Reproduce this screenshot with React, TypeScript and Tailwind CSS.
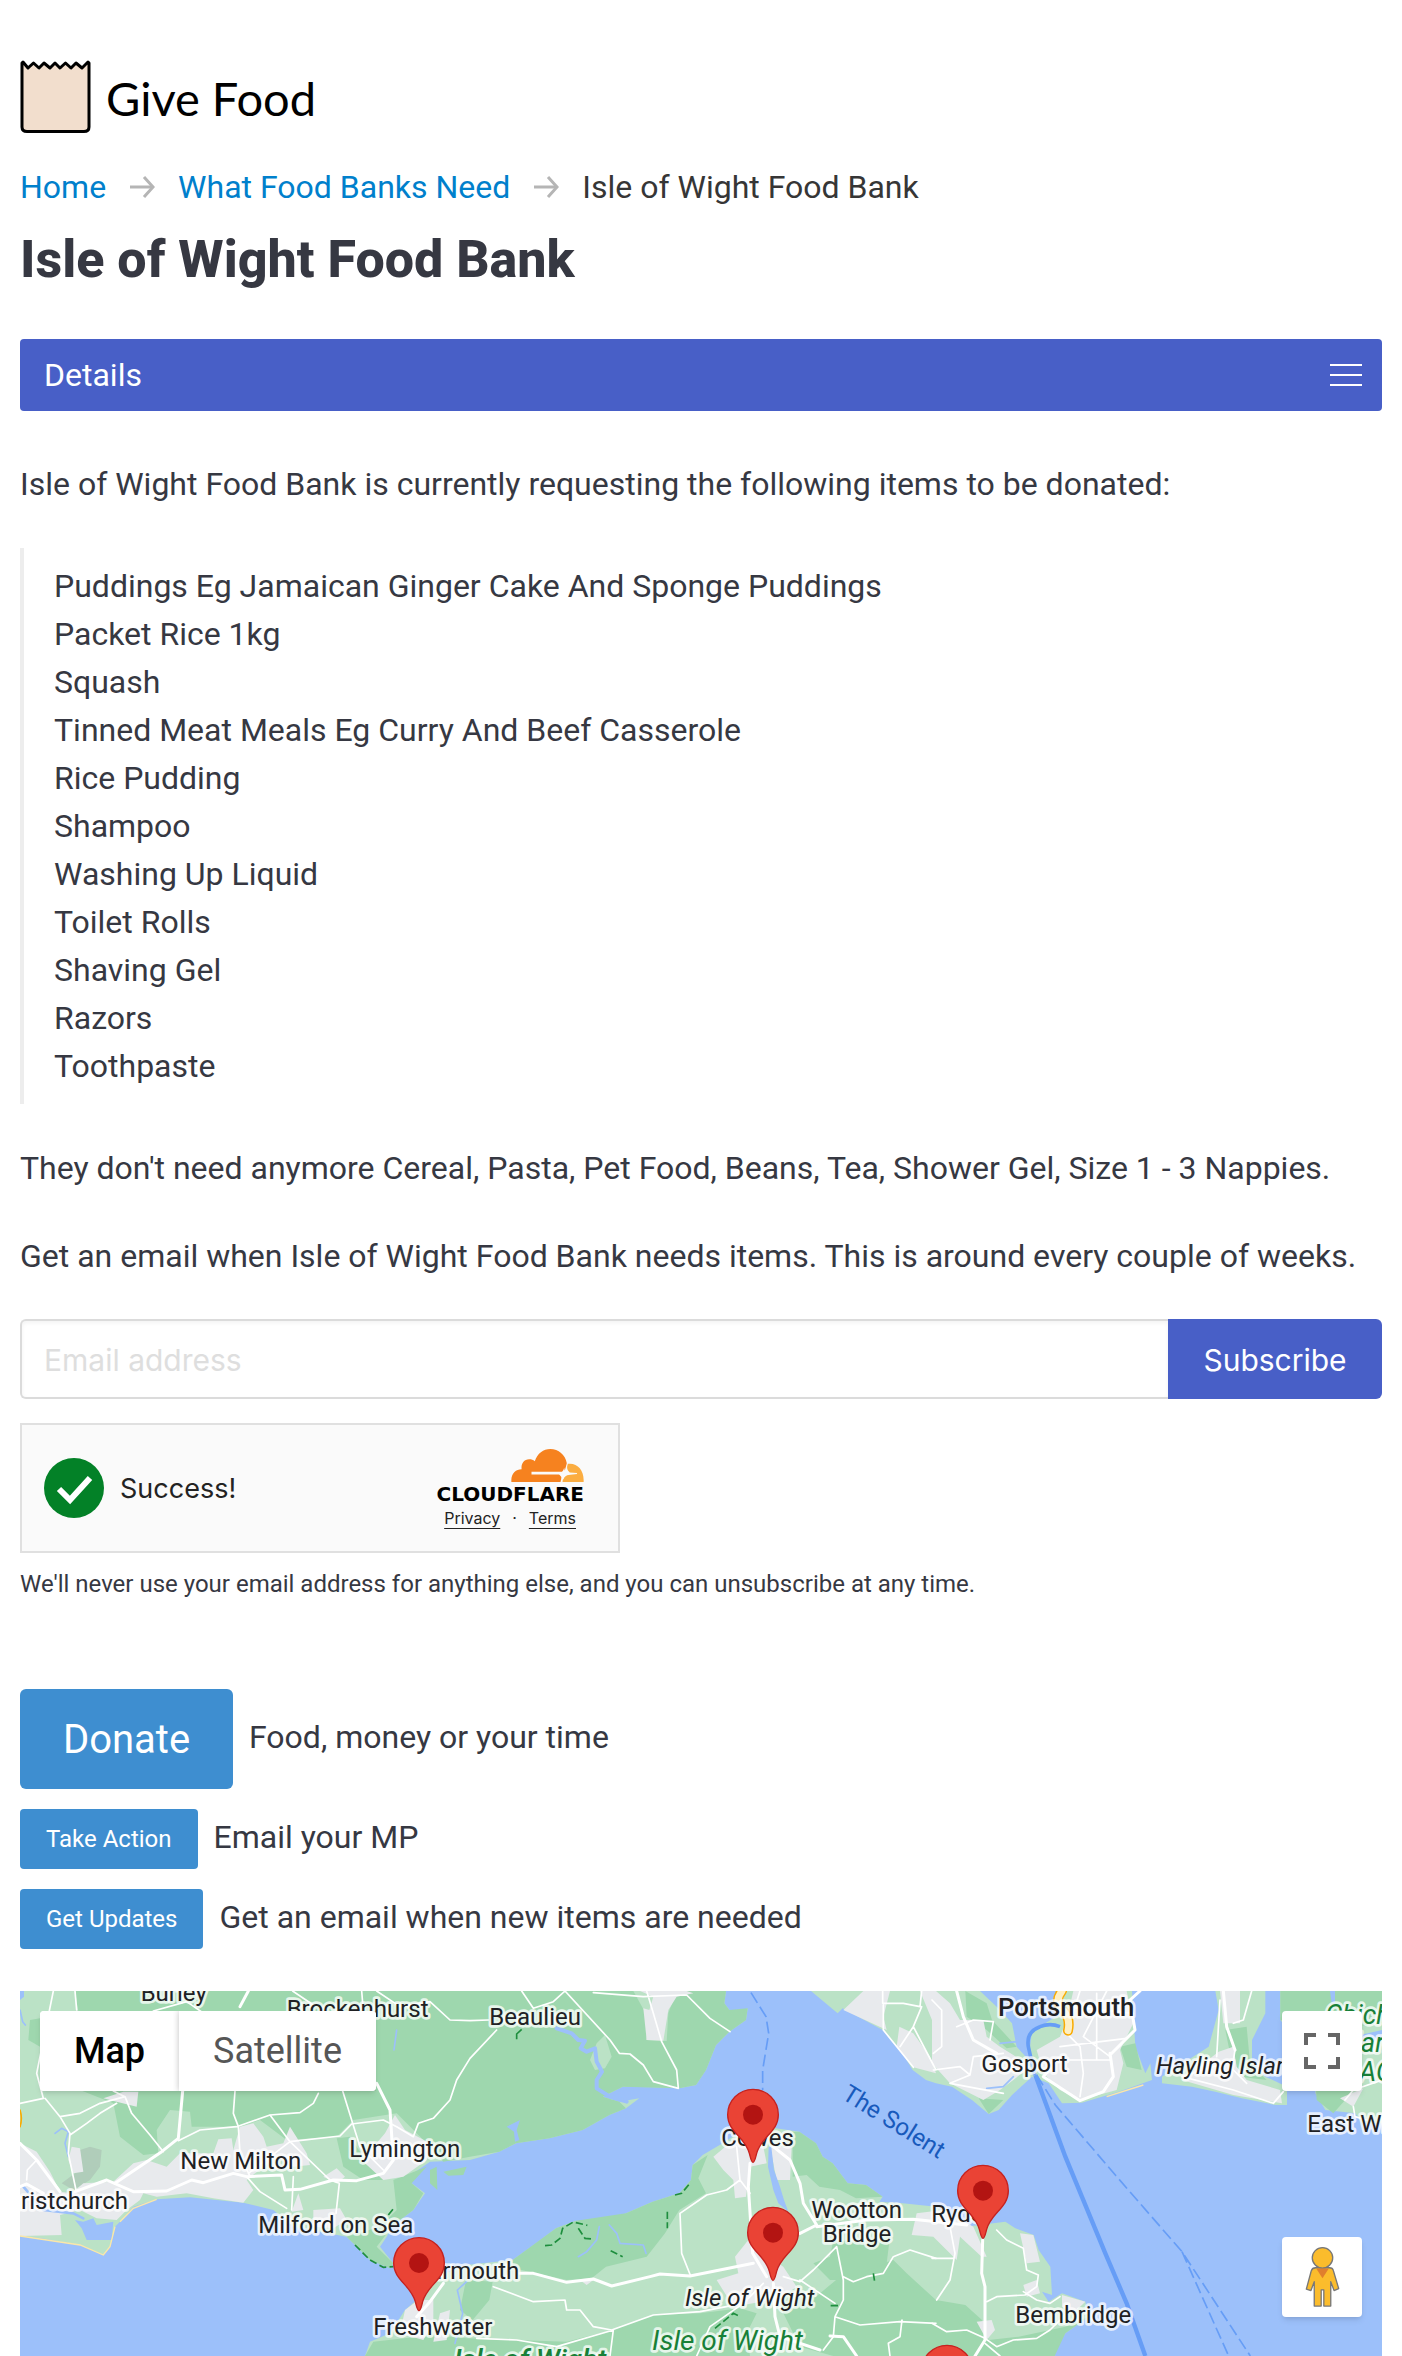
import type { ReactNode } from 'react'

const items = [
  'Puddings Eg Jamaican Ginger Cake And Sponge Puddings',
  'Packet Rice 1kg',
  'Squash',
  'Tinned Meat Meals Eg Curry And Beef Casserole',
  'Rice Pudding',
  'Shampoo',
  'Washing Up Liquid',
  'Toilet Rolls',
  'Shaving Gel',
  'Razors',
  'Toothpaste',
]

function Logo() {
  return (
    <a href="#home" aria-label="Give Food" className="flex items-center gap-[14px] text-black">
      <svg viewBox="0 0 72 74" className="h-[74px] w-[72px]" aria-hidden="true">
        <path
          d="M2 3 L3 2 L8 8 L13.500 3 L19 8 L24 3 L30 8 L35 3 L40 8 L45.500 3 L51 8 L56 3 L62 8 L68 2 L69 3 V67 Q69 71.500 64 71.500 H7 Q2 71.500 2 67 Z"
          fill="#f2decd"
          stroke="#000"
          strokeWidth="3"
          strokeLinejoin="round"
        />
      </svg>
      <span className="pt-[2px] font-['Lato',sans-serif] text-[47px] leading-none">Give Food</span>
    </a>
  )
}

function Arrow() {
  return (
    <svg viewBox="0 0 26 24" className="h-6 w-[26px] shrink-0" fill="none" stroke="#b5b5b5" strokeWidth="3" aria-hidden="true">
      <path d="M1 12 H24" />
      <path d="M15 2 L24 12 L15 22" />
    </svg>
  )
}

function CloudMark() {
  return (
    <svg viewBox="273 143 219 100" className="h-[33px] w-[73px]" aria-hidden="true">
      <path
        d="M273 243 V235 C274 216 287 204 304 204 C302 186 312 174 327 174 C334 174 339 176 344 180 C352 156 370 143 391 143 C416 143 436 160 441 186 L434 212 H334 V220 H418 Q426 226 424 234 L422 243 Z"
        fill="#f6821f"
      />
      <path d="M444 188 C472 184 492 206 492 236 V243 H428 C429 230 437 221 452 221 L472 219 V216 L450 214 Q438 206 444 188 Z" fill="#fbad41" />
      <path d="M433 200 Q434 216 452 218 Q436 220 430 236 Q430 220 412 218 Q430 216 433 200 Z" fill="#fafafa" />
    </svg>
  )
}

function Turnstile() {
  return (
    <div className="mt-6 flex h-[130px] w-[600px] max-w-full items-center border-2 border-[#e0e0e0] bg-[#fafafa] pl-[22px] pr-[34px] font-['Inter',sans-serif] text-[#232323]">
      <svg viewBox="0 0 60 60" className="size-[60px]" aria-hidden="true">
        <circle cx="30" cy="30" r="30" fill="#038127" />
        <path d="M15 31 L26 42 L46 20" fill="none" stroke="#fff" strokeWidth="6" />
      </svg>
      <span className="ml-4 pt-[2px] text-[27px]">Success!</span>
      <div className="ml-auto flex flex-col items-end">
        <CloudMark />
        <span className="mt-[2px] font-['DejaVu_Sans',sans-serif] text-[20px] font-bold leading-5 text-black">CLOUDFLARE</span>
        <div className="mt-1 flex gap-3 pr-2 text-base leading-5">
          <a href="#privacy" className="underline underline-offset-4">Privacy</a>
          <span>·</span>
          <a href="#terms" className="underline underline-offset-4">Terms</a>
        </div>
      </div>
    </div>
  )
}

function Pin({ x, y }: { x: number; y: number }) {
  return (
    <g transform={`translate(${x} ${y})`}>
      <path
        d="M0 143 C-5 143 -7 132 -11 116 C-24 66 -76 52 -76 0 A76 76 0 0 1 76 0 C76 52 24 66 11 116 C7 132 5 143 0 143 Z"
        fill="#ea4335"
        stroke="#c5221f"
        strokeWidth="4"
      />
      <circle r="30" fill="#b31412" />
    </g>
  )
}

function Label({ x, y, children, end, green, italic, medium, size = 72 }: {
  x: number
  y: number
  children: ReactNode
  end?: boolean
  green?: boolean
  italic?: boolean
  medium?: boolean
  size?: number
}) {
  return (
    <text
      x={x}
      y={y}
      fontSize={size}
      textAnchor={end ? 'end' : 'start'}
      fill={green ? '#188038' : '#202124'}
      fontStyle={italic ? 'italic' : 'normal'}
      fontWeight={medium ? 500 : 400}
      stroke="#fff"
      strokeOpacity="0.75"
      strokeWidth="16"
      strokeLinejoin="round"
      paintOrder="stroke"
    >
      {children}
    </text>
  )
}

const light = '#bbe2c6'
const dark = '#9ed7ae'
const town = '#e8eaed'
const water = '#9cc0fa'

function MapDrawing() {
  return (
    <svg viewBox="60 33 4086 1095" preserveAspectRatio="xMidYMid slice" className="h-full w-full font-['Roboto',sans-serif]" role="img" aria-label="Map of the Isle of Wight">
      <rect x="60" y="33" width="4086" height="1095" fill={water} />

      <g fill={light}>
        <path d="M60 33 V768 L125 775 240 795 310 825 330 800 345 740 370 715 400 680 470 658 570 652 650 660 730 668 820 690 850 715 880 740 1040 770 1065 795 1110 840 1170 865 1180 850 1140 800 1160 770 1180 735 1240 690 1275 640 1235 610 1240 580 1290 545 1410 540 1498 515 1548 490 1648 475 1748 450 1828 405 1878 385 1918 355 1858 365 1808 350 1868 320 1958 322 2038 325 2088 315 2118 270 2148 195 2188 155 2238 120 2243 85 2218 95 2188 90 2173 70 2178 33 Z" />
        <path d="M2433 33 L2513 100 2528 85 2648 150 2698 205 2738 270 2778 300 2808 310 2856 320 2916 360 2966 402 2996 390 3036 345 3096 290 3146 310 3186 370 3246 368 3356 335 3456 300 3451 250 3436 280 3406 200 3396 33 Z" />
        <path d="M3646 33 L3656 90 3626 200 3486 290 3486 310 3576 320 3646 335 3726 355 3826 375 3861 375 3861 320 3796 290 3756 250 3756 180 3796 100 3796 33 Z" />
        <path d="M3841 33 H4146 V430 L4086 430 4066 400 3976 390 3946 340 3946 250 3841 120 Z" />
        <path d="M1095 1128 L1110 1085 1170 1060 1215 990 1250 960 1310 890 1398 855 1538 840 1608 790 1668 745 1728 722 1798 740 1828 730 1878 700 1958 665 2038 640 2073 600 2078 555 2108 525 2168 490 2228 450 2298 440 2398 455 2448 490 2468 530 2498 550 2543 610 2598 615 2648 650 2638 665 2708 670 2808 680 2896 740 3016 725 3046 745 3101 765 3116 810 3151 860 3156 945 3126 935 3146 965 3186 940 3256 965 3266 1010 3196 1060 3166 1110 3164 1128 Z" />
      </g>

      <g fill={dark}>
        <path d="M225 33 L235 95 240 330 340 370 360 470 430 525 475 520 470 450 510 390 570 395 575 440 720 440 780 420 860 480 1010 470 1060 420 1190 400 1250 460 1300 510 1330 545 1410 530 1498 515 1548 490 1648 475 1748 450 1828 405 1878 385 1858 365 1808 350 1868 320 2038 325 2088 315 2118 270 2148 195 2188 155 2238 120 2243 85 2188 90 2173 70 2178 33 Z" />
        <path d="M90 120 L120 115 120 200 85 180 Z M1180 600 L1280 560 1235 610 1270 640 1240 690 1180 735 1130 800 1180 850 1170 865 1110 840 1065 795 1040 770 1140 740 1190 690 Z M1290 570 L1310 560 1312 630 1290 610 Z M1330 575 L1400 560 1390 585 1345 587 Z" />
        <path d="M1010 475 L1050 470 1110 560 1150 600 1090 600 1030 560 Z" />
        <path d="M1538 840 L1668 745 1728 722 1878 700 1958 665 2038 640 2073 600 2078 555 2123 525 2095 595 2118 640 2038 690 1995 760 1940 830 1818 860 1775 895 1700 900 1540 865 Z" />
        <path d="M2378 455 H2398 L2448 490 2468 530 2498 550 2543 610 2598 615 2648 650 2568 655 2520 630 2458 620 2420 585 2378 590 Z" />
        <path d="M1095 1128 L1120 1085 1300 1065 1400 1075 1700 1085 1838 1050 1958 1005 2100 1000 2220 985 2270 1000 2240 1060 2250 1128 Z" />
        <path d="M2340 950 L2448 950 2520 890 2680 840 2720 880 2808 960 2896 975 2946 1020 2966 1080 3056 1070 3196 1040 3266 1010 3196 1060 3164 1128 H2500 L2400 1100 2350 1000 Z" />
        <path d="M1398 900 L1478 905 1468 960 1418 1020 1380 990 Z M2440 850 L2490 830 2500 780 2600 790 2670 770 2660 850 2530 900 2490 900 Z" />
        <path d="M3676 150 L3740 140 3750 250 3800 300 3720 290 3690 220 Z M2896 33 L2960 70 2976 120 3050 200 3020 205 2960 150 2900 110 Z M3360 200 L3406 190 3425 270 3380 260 Z M3946 300 L4010 333 4060 333 4000 400 3950 360 Z M3841 33 H4146 V130 L3980 150 3841 120 Z M2936 355 L3010 360 2966 402 Z" />
      </g>

      <g fill={light}>
        <path d="M1900 33 L1948 120 1938 180 2000 183 2005 100 2030 33 Z M1790 190 L1815 165 1835 230 1815 265 1785 270 1770 240 Z" />
      </g>
      <path d="M185 610 L245 565 240 510 270 500 305 510 300 560 270 600 220 630 Z" fill="#b0cdba" />

      <g fill={town}>
        <path d="M60 490 L110 515 150 575 180 635 215 640 250 610 340 605 400 550 440 540 500 560 540 520 640 520 655 478 695 475 700 510 720 440 760 430 790 470 800 500 850 490 870 440 920 520 930 555 880 560 830 530 790 560 740 600 760 630 730 668 640 655 560 640 470 650 430 640 420 660 380 690 350 720 290 715 240 690 180 705 185 765 60 768 Z" />
        <path d="M310 355 L370 335 415 335 410 380 350 365 Z M215 500 L240 505 250 575 220 580 205 540 Z M895 640 L910 690 875 695 Z M940 690 L1020 685 1040 720 1000 745 940 740 Z M970 590 L1010 565 1035 590 1010 610 Z M1095 530 L1155 460 1185 405 1215 450 1290 490 1280 540 1210 590 1150 600 1095 550 Z" />
        <path d="M1810 33 H1920 L1960 50 1948 90 1930 85 1940 180 1990 182 2005 90 2030 50 2080 40 2060 33 Z" />
        <path d="M2590 33 H2670 L2650 110 2660 150 2530 90 Z M2698 140 L2740 160 2790 230 2808 280 2740 262 2690 200 Z M2760 33 H2808 L2850 70 2880 120 2950 120 2960 170 3000 200 3040 225 3090 260 3040 300 3000 330 2950 360 2850 310 2796 250 2796 120 Z" />
        <path d="M3220 33 H3380 L3400 130 3360 210 3370 250 3350 330 3240 360 3180 330 3130 280 3110 210 3180 170 3200 120 Z" />
        <path d="M3660 33 H3720 V130 L3670 130 Z M3656 215 L3700 200 3710 260 3740 300 3840 330 3846 370 3700 345 3546 300 Z M4020 355 L4090 325 4060 380 Z" />
        <path d="M2140 530 L2200 480 2290 500 2300 550 2250 560 2238 650 2205 655 2200 600 2170 570 Z M2310 500 L2375 500 2370 600 2330 600 Z M2205 830 L2245 780 2320 840 2350 860 2390 920 2340 955 2200 980 2150 900 2215 880 Z" />
        <path d="M1215 990 L1255 960 1300 960 1300 1030 1270 1080 1200 1060 Z M1320 1000 L1350 990 1340 1080 1300 1085 Z M1740 900 L1780 900 1760 915 Z M2750 700 L2830 690 2920 740 2960 830 2945 830 2880 770 2870 840 2800 770 2735 765 Z M3060 760 L3100 765 3120 845 3080 850 Z M3070 915 L3110 900 3120 940 3080 950 Z M3186 945 L3256 965 3220 1000 3186 980 Z M2930 1025 L2975 1020 2985 1050 2960 1080 Z" />
      </g>

      <g fill={water}>
        <path d="M2940 33 L2990 80 3036 130 3050 200 3086 240 3096 150 3136 130 3176 105 3166 70 3180 33 Z" />
        <path d="M2306 500 L2314 500 2322 570 2340 620 2352 660 2365 695 2335 670 2320 630 2304 560 Z" />
        <path d="M225 720 L250 725 280 715 290 735 340 725 335 780 260 780 245 745 Z M60 33 H72 V50 L60 60 Z M3990 33 H4005 V75 L3995 70 Z M4080 165 L4146 150 V180 L4080 185 Z" />
        <path d="M1520 440 L1560 420 1550 450 1558 480 1545 485 1542 455 Z" />
      </g>
      <g fill="none" stroke={water} strokeLinejoin="round" strokeLinecap="round">
        <path d="M1670 145 L1715 160 1735 180 1755 182 1742 205 1760 215 1785 205 1790 245 1806 275 1790 300 1790 325 1830 350 1880 365" strokeWidth="12" />
        <path d="M70 620 L130 690 220 700 250 715" strokeWidth="8" />
        <path d="M165 460 L185 445 205 455 195 490 205 530 M60 90 L68 125 76 135 M1190 150 L1182 210 M1365 1090 L1388 1000 1372 930 1400 905 M1798 740 L1790 780 1760 815 1735 830 M1828 735 L1850 760 1860 790 1930 795 1938 820 M3000 190 L3050 185 3060 205 M2960 325 L3010 320 3040 290" strokeWidth="5" />
      </g>

      <g fill="none" stroke="#fff" strokeLinejoin="round" strokeLinecap="round">
        <g strokeWidth="9">
          <path d="M60 490 L110 540 180 635 M225 635 L320 600 400 635 500 633 575 600 610 608 700 580 740 590 845 585 855 630 900 628 1000 600 1070 602 1150 580 1180 540 1170 390 1130 310" />
          <path d="M345 610 L485 515 535 475 548 333 M720 80 L745 33 M60 620 L80 612 130 640" />
          <path d="M2250 550 L2245 620 2258 820 2300 890 M2320 500 L2370 540 2400 610 2410 670 2450 735 2400 760 M2070 888 L2260 850 M1560 880 L1600 880 1700 907 1780 897 1835 918 1950 890 1980 882 2070 888 M2450 740 L2600 720 2740 718 2900 735" />
          <path d="M2948 780 L2945 880 2955 920 2955 1080 2925 1128 M2320 910 L2325 1010 2340 1070 2460 1110 M2490 1068 L2530 1070 2570 1128" />
          <path d="M3170 240 L3130 290 3240 362 3310 335 3340 290 3330 220 M3420 33 L3390 60 3405 150 3330 225 M2870 33 L2890 110 2920 180 2990 220" />
          <path d="M1250 1010 L1290 965 1330 910" />
          <path d="M3670 33 L3680 140 3705 210" />
        </g>
        <g strokeWidth="5">
          <path d="M60 370 L130 355 110 280 160 33 M225 33 L230 90 M135 355 L180 410 210 460 205 520 228 630 M180 410 L240 400 300 370 375 350 395 400 450 465 490 515 M210 465 L260 430 300 400 350 370 M375 350 L340 333 M535 482 L600 450 710 440 810 405 900 398 940 370 955 340 M705 333 L700 400 715 440 720 520 750 590 M810 405 L870 485 1020 468 1055 432 1150 420 1190 440 1240 470 M1028 333 L1058 430 1080 500 1150 570 M740 590 L780 635 860 685 M880 590 L875 690 M870 485 L990 600 1018 610 1008 700 M870 485 L745 580 M80 600 L82 570 110 540 M878 33 L940 75 M460 93 L560 65 640 120 M1085 33 L1090 93 M1130 33 L1200 80 1290 65 1350 120 1410 122 1465 120 M1240 470 L1255 430 1300 415 1350 360 1370 300 1410 235 1490 150" />
          <path d="M1565 33 L1600 85 1660 65 1695 33 L1830 180 1858 220 1890 222 1930 255 1960 305 2035 325 2030 270 1985 185 1960 100 1940 33 M1780 38 L1930 50 2060 45 2130 115 2190 155" />
          <path d="M2210 500 L2220 600 2180 630 2120 645 2040 700 2045 820 2072 888 M2220 600 L2250 640 M1480 920 L1600 965 1695 960 1700 990 1740 990 1780 1040 1835 1050 1960 1005 2100 995 2230 970 M1430 1075 L1550 1080 1670 1100 1840 1050 1830 1128 M2290 910 L2230 970 2130 1040 2090 1128 M2350 890 L2400 905 2440 870 2510 800 2530 900 2530 960 2505 1010 2500 1070 2470 1110 M2400 900 L2505 970 M2505 1010 L2580 1035 2700 1025 2808 1030 M2530 890 L2560 905 2600 890 2650 880 2680 830 2730 810 2808 835 M2706 1020 L2700 1070 2665 1090 2670 1128" />
          <path d="M2850 740 L2865 820 2850 900 2810 960 M2990 750 L3020 780 3070 805 3080 870 3115 885 3110 920 3075 945 2990 950 2960 965 M3070 935 L3110 960 3150 970 3180 950 M2796 1030 L2840 1055 2900 1050 2955 1075 2990 1100 3040 1080 3110 1075 3150 1050 3180 1020 M2796 835 H2860 M2955 1090 L3000 1128" />
          <path d="M2796 60 L2825 90 2825 200 2800 220 M2870 140 L2920 120 2980 125 2970 180 M2800 270 L2880 260 2910 285 2850 310 3010 340 M2910 285 L2920 230 3010 220 M3240 33 L3200 160 3240 200 3250 280 3240 350 M3320 33 L3250 170 3330 230 M3210 80 L3400 100 M3180 200 L3380 175 M3160 240 L3330 240 M3290 40 L3290 240 M2648 33 V70 L2710 70 2760 80 2765 33 M2650 75 V150 L2740 262 M2700 200 L2740 140 2808 270 M2740 140 L2765 80 M3660 60 L3650 230 M3700 130 L3730 120 3755 33 M3705 210 L3700 240 3640 260 3546 290 3700 330 3820 370 3850 335 M3700 270 L3740 310 M4060 380 L4065 410 4100 420 M4035 360 L4060 330 4146 300" />
        </g>
      </g>

      <g fill="none" stroke="#fbe7a8" strokeWidth="4">
        <path d="M60 768 L240 795 310 825 330 800 345 740 M360 725 L400 685 470 658 M3320 350 L3430 315" />
      </g>
      <g fill="none" strokeLinecap="round">
        <path d="M3186 33 Q3160 66 3190 92 Q3212 116 3204 152" stroke="#f9ab00" strokeWidth="30" />
        <path d="M3186 33 Q3160 66 3190 92 Q3212 116 3204 152" stroke="#feefc3" strokeWidth="21" />
        <path d="M60 390 Q68 415 60 440" stroke="#f9ab00" strokeWidth="5" />
      </g>

      <g fill="none" stroke="#669df6" strokeWidth="5">
        <path d="M3180 140 Q3150 128 3120 140 Q3078 155 3085 200 L3104 285" strokeWidth="11" />
        <path d="M3106 285 L3196 530 3316 820 3380 970 3436 1128" strokeWidth="13" />
        <path d="M3110 285 L3166 375 3346 585 3546 815 3751 1128 M3546 815 L3686 1128" strokeDasharray="36 14" />
        <path d="M2253 38 L2298 110 2306 160 2288 270 V330" strokeDasharray="36 14" />
      </g>
      <g fill="none" stroke="#1e8e3e" strokeWidth="5" strokeDasharray="22 10">
        <path d="M1065 795 L1110 840 1150 862 1180 860 M1165 705 L1185 680 M2025 645 L2045 640 2068 612 M2002 695 V745 M1635 797 L1655 795 1680 775 1688 745 1720 726 1762 736 M1735 745 L1755 775 1780 777 M1832 812 L1868 830 M2620 880 L2624 905 M2492 977 H2515 M2145 1045 L2200 1000 2222 1010" />
        <path d="M1550 178 V162 L1565 148" strokeDasharray="none" />
      </g>

      <Label x={422} y={62}>Burley</Label>
      <Label x={860} y={111}>Brockenhurst</Label>
      <Label x={1468} y={136}>Beaulieu</Label>
      <Label x={541} y={568}>New Milton</Label>
      <Label x={1048} y={530}>Lymington</Label>
      <Label x={384} y={688} end>Christchurch</Label>
      <Label x={775} y={758}>Milford on Sea</Label>
      <Label x={1558} y={898} end>Yarmouth</Label>
      <Label x={1120} y={1066}>Freshwater</Label>
      <Label x={2164} y={498}>Cowes</Label>
      <Label x={2434} y={715}>Wootton</Label>
      <Label x={2468} y={787}>Bridge</Label>
      <Label x={2794} y={726}>Ryde</Label>
      <Label x={3046} y={1030}>Bembridge</Label>
      <Label x={2944} y={277}>Gosport</Label>
      <Label x={2994} y={108} medium size={77}>Portsmouth</Label>
      <Label x={3922} y={455}>East Wittering</Label>
      <Label x={2055} y={977} italic>Isle of Wight</Label>
      <Label x={3468} y={281} italic>Hayling Island</Label>
      <Label x={1956} y={1109} italic green size={84}>Isle of Wight</Label>
      <Label x={1362} y={1166} italic green medium size={84}>Isle of Wight</Label>
      <Label x={3976} y={132} italic green size={80}>Chichester</Label>
      <Label x={4028} y={217} italic green size={80}>Harbour</Label>
      <Label x={4078} y={302} italic green size={80}>AONB</Label>
      <text transform="translate(2522 354) rotate(32)" fontSize="73" fill="#185abc">The Solent</text>

      <Pin x={1257} y={849} />
      <Pin x={2259} y={404} />
      <Pin x={2319} y={758} />
      <Pin x={2949} y={632} />
      <Pin x={2841} y={1172} />
    </svg>
  )
}

function FoodBankMap() {
  return (
    <section className="relative mt-[42px] h-[365px] overflow-hidden font-['Roboto',sans-serif]" aria-label="Map">
      <MapDrawing />
      <div className="absolute left-5 top-5 flex h-20 rounded bg-white text-4xl shadow-md">
        <button type="button" className="w-[139px] rounded-l bg-white font-medium text-black">Map</button>
        <button type="button" className="w-[197px] rounded-r bg-white text-[#565656] shadow-[0_0_6px_rgba(0,0,0,0.25)] [clip-path:inset(0_0_0_-6px)]">Satellite</button>
      </div>
      <button type="button" aria-label="Toggle fullscreen view" className="absolute right-5 top-5 flex size-20 items-center justify-center rounded bg-white shadow-md">
        <svg viewBox="0 0 36 36" className="size-9" fill="none" stroke="#666" strokeWidth="4" aria-hidden="true">
          <path d="M2 12 V2 H12 M24 2 H34 V12 M34 24 V34 H24 M12 34 H2 V24" />
        </svg>
      </button>
      <button type="button" aria-label="Street View" className="absolute right-5 top-[246px] flex size-20 items-center justify-center rounded bg-white shadow-md">
        <svg viewBox="1114 798 106 186" className="h-[62px] w-[35px]" aria-hidden="true">
          <g fill="#fbbc2c" stroke="#777" strokeWidth="4" strokeLinejoin="round">
            <path d="M1146 863 H1188 Q1198 863 1200 872 L1216 926 L1202 932 L1192 905 V979 H1171 V930 H1163 V979 H1142 V905 L1132 932 L1118 928 L1133 872 Q1136 863 1146 863 Z" />
            <circle cx="1167" cy="833" r="31" />
          </g>
          <path d="M1148 865 H1186 L1167 895 Z" fill="#e07f2d" />
        </svg>
      </button>
    </section>
  )
}

export default function App() {
  return (
    <main className="min-h-screen bg-white px-5 pt-[60px] font-['Roboto',sans-serif] text-[32px] leading-[48px] text-[#363842]">
      <header>
        <Logo />
      </header>

      <nav aria-label="Breadcrumb" className="mt-[29px]">
        <ol className="flex flex-wrap items-center gap-x-[23px]">
          <li className="flex items-center gap-x-[23px]"><a href="#home" className="text-[#0080cc]">Home</a><Arrow /></li>
          <li className="flex items-center gap-x-[23px]"><a href="#needs" className="text-[#0080cc]">What Food Banks Need</a><Arrow /></li>
          <li aria-current="page" className="text-[#363636]">Isle of Wight Food Bank</li>
        </ol>
      </nav>

      <h1 className="mt-[19px] text-[52px] font-extrabold leading-[60px]">Isle of Wight Food Bank</h1>

      <button type="button" className="mt-[49px] flex h-[72px] w-full items-center justify-between rounded bg-[#485fc7] pl-6 pr-5 text-left text-white">
        <span>Details</span>
        <svg viewBox="0 0 32 22" className="h-[22px] w-8" stroke="#fff" strokeWidth="2" aria-hidden="true">
          <path d="M0 1 H32 M0 11 H32 M0 21 H32" />
        </svg>
      </button>

      <p className="mt-[49px]">Isle of Wight Food Bank is currently requesting the following items to be donated:</p>

      <ul className="my-10 border-l-4 border-[#ededed] py-[14px] pl-[30px]">
        {items.map((item) => (
          <li key={item}>{item}</li>
        ))}
      </ul>

      <p>They don't need anymore Cereal, Pasta, Pet Food, Beans, Tea, Shower Gel, Size 1 - 3 Nappies.</p>

      <form onSubmit={(e) => e.preventDefault()}>
        <label htmlFor="email" className="mt-10 block">
          Get an email when Isle of Wight Food Bank needs items. This is around every couple of weeks.
        </label>
        <div className="mt-[39px] flex h-20 font-['Inter',sans-serif] text-[30px]">
          <input
            id="email"
            type="email"
            placeholder="Email address"
            className="min-w-0 flex-1 rounded-l-md border-2 border-r-0 border-[#dbdbdb] px-[22px] pt-[2px] shadow-[inset_0_2px_4px_rgba(10,10,10,0.05)] placeholder:text-[#dedede]"
          />
          <button type="submit" className="w-[214px] rounded-r-md bg-[#485fc7] pt-[2px] text-white">Subscribe</button>
        </div>
        <Turnstile />
        <p className="mt-[13px] text-2xl leading-9">
          We'll never use your email address for anything else, and you can unsubscribe at any time.
        </p>
      </form>

      <div className="mt-[87px] flex flex-col gap-5">
        <div className="flex items-center gap-4">
          <button type="button" className="h-[100px] w-[213px] rounded-md bg-[#3e8ed0] pt-[2px] text-[40px] text-white">Donate</button>
          <span className="pb-1">Food, money or your time</span>
        </div>
        <div className="flex items-center gap-4">
          <button type="button" className="h-[60px] rounded bg-[#3e8ed0] px-[26px] text-2xl text-white">Take Action</button>
          <span className="pb-1">Email your MP</span>
        </div>
        <div className="flex items-center gap-4">
          <button type="button" className="h-[60px] rounded bg-[#3e8ed0] px-[26px] text-2xl text-white">Get Updates</button>
          <span className="pb-1">Get an email when new items are needed</span>
        </div>
      </div>

      <FoodBankMap />
    </main>
  )
}
